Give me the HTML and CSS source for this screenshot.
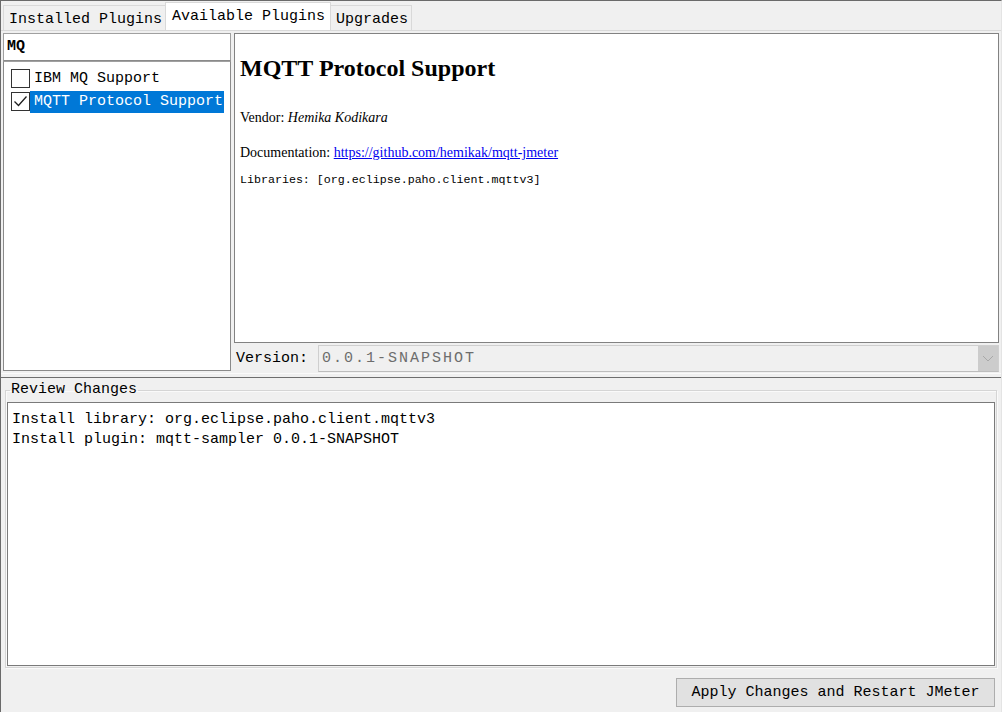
FILE: index.html
```html
<!DOCTYPE html>
<html>
<head>
<meta charset="utf-8">
<link rel="stylesheet" href="styles.css">
</head>
<body>
<div class="window">
  <div class="top">
    <div class="tabs">
      <div class="tab">Installed Plugins</div>
      <div class="tab active">Available Plugins</div>
      <div class="tab">Upgrades</div>
    </div>
    <div class="tabpanel">
      <div class="leftcol">
        <div class="search">MQ</div>
        <div class="list">
          <div class="item">
            <span class="check"></span>
            <span class="label">IBM MQ Support</span>
          </div>
          <div class="item">
            <span class="check">
              <svg width="17" height="17" viewBox="0 0 17 17"><polyline points="2.5,8.5 6.5,12.5 14.5,3.5" fill="none" stroke="#1e1e1e" stroke-width="1.3"/></svg>
            </span>
            <span class="label selected">MQTT Protocol Support</span>
          </div>
        </div>
      </div>
      <div class="rightcol">
        <div class="details">
          <h1 class="title">MQTT Protocol Support</h1>
          <p class="meta">Vendor: <i>Hemika Kodikara</i></p>
          <p class="meta">Documentation: <a class="link" href="#">https://github.com/hemikak/mqtt-jmeter</a></p>
          <div class="libs">Libraries: [org.eclipse.paho.client.mqttv3]</div>
        </div>
        <div class="version">
          <span class="vlabel">Version:</span>
          <div class="combo">
            <span class="ctext">0.0.1-SNAPSHOT</span>
            <span class="carrow">
              <svg width="12" height="7" viewBox="0 0 12 7"><polyline points="1,1 6,6 11,1" fill="none" stroke="#a8a8a8" stroke-width="1"/></svg>
            </span>
          </div>
        </div>
      </div>
    </div>
  </div>
  <div class="divider"></div>
  <div class="bottom">
    <fieldset class="review">
      <legend class="rtitle">Review Changes</legend>
      <div class="changes">
        <div>Install library: org.eclipse.paho.client.mqttv3</div>
        <div>Install plugin: mqtt-sampler 0.0.1-SNAPSHOT</div>
      </div>
    </fieldset>
    <div class="actions">
      <button class="apply">Apply Changes and Restart JMeter</button>
    </div>
  </div>
</div>
</body>
</html>
```

FILE: styles.css
```css
html, body {
  margin: 0;
  padding: 0;
}
body {
  width: 1002px;
  height: 712px;
  overflow: hidden;
  background: #f0f0f0;
  font-family: "Liberation Mono", monospace;
  font-size: 15px;
  color: #000;
}
.window {
  box-sizing: border-box;
  width: 1002px;
  height: 712px;
  border-top: 1px solid #6a6a6a;
  border-left: 1px solid #6a6a6a;
  border-right: 1px solid #e4e4e4;
  display: flex;
  flex-direction: column;
}
.top {
  height: 372px;
  display: flex;
  flex-direction: column;
}
.tabs {
  display: flex;
  align-items: flex-end;
  height: 29px;
  padding-left: 2px;
}
.tab {
  box-sizing: border-box;
  height: 25px;
  line-height: 23px;
  padding: 2px 3px 0 5px;
  border: 1px solid #d9d9d9;
  border-bottom: none;
  background: #f0f0f0;
  margin-right: -1px;
}
.tab.active {
  height: 28px;
  line-height: 26px;
  background: #fff;
  position: relative;
  z-index: 1;
  padding: 1px 5px 0 6px;
}
.tabpanel {
  flex: 1;
  border-top: 1px solid #d9d9d9;
  display: flex;
  padding: 2px 2px 0 2px;
  gap: 3px;
}
.leftcol {
  width: 228px;
  display: flex;
  flex-direction: column;
}
.search {
  box-sizing: border-box;
  height: 28px;
  background: #fff;
  border: 1px solid #a0a0a0;
  border-bottom-color: #8a8a8a;
  padding: 4px 0 0 3px;
  font-weight: bold;
}
.list {
  box-sizing: border-box;
  height: 310px;
  background: #fff;
  border: 1px solid #8a8a8a;
  border-top: 1px solid #a0a0a0;
  padding: 5px 0 0 7px;
}
.item {
  display: flex;
  align-items: center;
  height: 23px;
}
.check {
  box-sizing: border-box;
  width: 19px;
  height: 19px;
  border: 1px solid #333;
  background: #fff;
  display: flex;
  align-items: center;
  justify-content: center;
}
.label {
  padding: 0 1px 0 4px;
  height: 22px;
  line-height: 22px;
}
.label.selected {
  background: #0078d7;
  color: #fff;
}
.rightcol {
  flex: 1;
  display: flex;
  flex-direction: column;
}
.details {
  box-sizing: border-box;
  height: 310px;
  background: #fff;
  border: 1px solid #828282;
  padding: 19px 0 0 5px;
  font-family: "Liberation Serif", serif;
}
.title {
  margin: 0;
  font-size: 24px;
  font-weight: bold;
  line-height: 30px;
}
.meta {
  margin: 0;
  font-size: 14px;
  line-height: 16px;
}
.title + .meta {
  margin-top: 27px;
}
.meta + .meta {
  margin-top: 19px;
}
.link {
  color: #0000ee;
  text-decoration: underline;
}
.libs {
  margin-top: 12px;
  font-family: "Liberation Mono", monospace;
  font-size: 11.65px;
  line-height: 14px;
}
.version {
  display: flex;
  align-items: center;
  margin-top: 2px;
  height: 27px;
}
.vlabel {
  width: 82px;
  padding-left: 2px;
}
.combo {
  box-sizing: border-box;
  flex: 1;
  height: 27px;
  background: #f0f0f0;
  border: 1px solid #cfcfcf;
  border-bottom-color: #bdbdbd;
  display: flex;
  align-items: center;
}
.ctext {
  flex: 1;
  padding-left: 3px;
  color: #6d6d6d;
  letter-spacing: 2px;
}
.carrow {
  width: 20px;
  height: 25px;
  background: #cccccc;
  display: flex;
  align-items: center;
  justify-content: center;
}
.divider {
  height: 5px;
  border-top: 1px solid #fafafa;
  border-bottom: 1px solid #6e6e6e;
  box-sizing: border-box;
}
.bottom {
  flex: 1;
  display: flex;
  flex-direction: column;
  padding: 0 4px 0 4px;
}
.review {
  margin: 4px 0 0 0;
  padding: 0 1px 2px 1px;
  border: 1px solid #d5d5d5;
  box-shadow: inset 1px 1px 0 #fafafa, 1px 1px 0 #fafafa;
  height: 286px;
  box-sizing: border-box;
}
.rtitle {
  padding: 0 1px;
  margin-left: 3px;
  line-height: 16px;
}
.changes {
  box-sizing: border-box;
  height: 264px;
  margin-top: 4px;
  background: #fff;
  border: 1px solid #7a7a7a;
  padding: 7px 0 0 4px;
  line-height: 20px;
}
.actions {
  display: flex;
  justify-content: flex-end;
  padding: 10px 2px 0 0;
}
.apply {
  box-sizing: border-box;
  width: 319px;
  height: 29px;
  background: #e1e1e1;
  border: 1px solid #adadad;
  font-family: "Liberation Mono", monospace;
  font-size: 15px;
  color: #000;
  padding: 0;
}
```
